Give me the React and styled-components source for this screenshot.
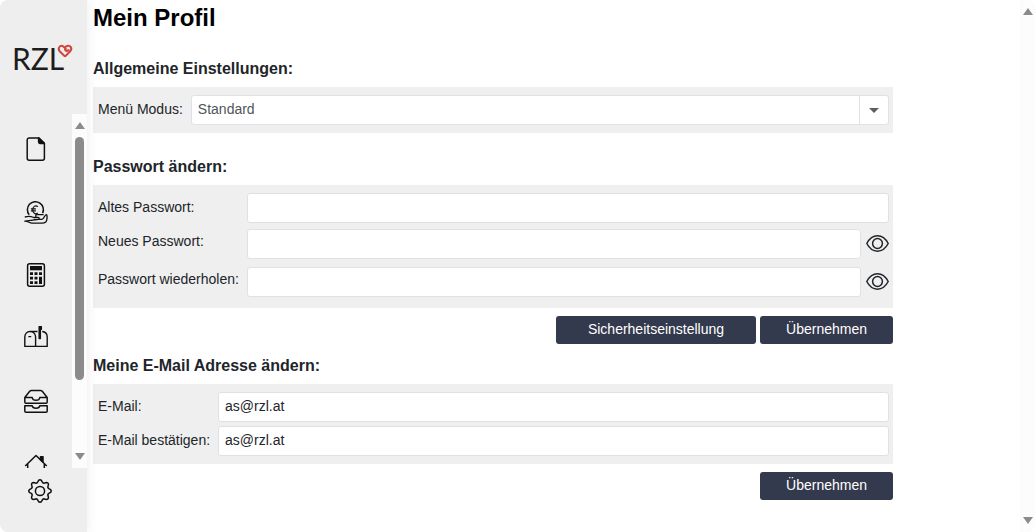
import React, { useState } from "react";
import styled, { createGlobalStyle, css } from "styled-components";

const GlobalStyle = createGlobalStyle`
  *, *::before, *::after { box-sizing: border-box; }
  body {
    margin: 0;
    background: #fff;
    color: #212529;
    font-family: "Liberation Sans", Arial, sans-serif;
    font-size: 14px;
  }
  input, select, button { font: inherit; }
`;

const Shell = styled.div`
  display: flex;
  height: 100vh;
  overflow: hidden;
  border-radius: 8px;
`;

const Sidebar = styled.aside`
  display: flex;
  flex-direction: column;
  flex: none;
  width: 87px;
  background: #eee;
  box-shadow: 0 0 12px rgba(0, 0, 0, 0.08);
  z-index: 1;
`;

const LogoLink = styled.a`
  flex: none;
  height: 114px;
  padding: 38px 0 0 13px;
  svg { display: block; }
`;

const NavArea = styled.div`
  display: flex;
  flex: 1;
  min-height: 0;
`;

const Nav = styled.nav`
  flex: 1;
  overflow: hidden;
  padding-top: 4px;
`;

const NavLink = styled.a`
  display: flex;
  justify-content: center;
  height: 63px;
  padding-top: 19px;
  color: #111;
`;

const SidebarFooter = styled.div`
  flex: none;
  height: 64px;
  padding: 11px 0 0 28px;
`;

const SettingsLink = styled.a`
  display: block;
  width: 24px;
  height: 24px;
  color: #111;
`;

const Scrollbar = styled.div`
  display: flex;
  flex-direction: column;
  align-items: center;
  flex: none;
  width: 15px;
  padding: 8px 0;
  background: #fcfcfc;
`;

const ScrollArrow = styled.span`
  border: 5px solid transparent;
  ${(p) =>
    p.$down
      ? css`border-top: 7px solid #8b8b8b; border-bottom: 0;`
      : css`border-bottom: 7px solid #8b8b8b; border-top: 0;`}
`;

const ScrollTrack = styled.div`
  flex: 1;
  padding: 8px 0;
`;

const ScrollThumb = styled.div`
  width: 9px;
  height: 79%;
  border-radius: 5px;
  background: #8b8b8b;
`;

const Main = styled.main`
  flex: 1;
  min-width: 0;
  overflow: hidden;
  padding-left: 6px;
`;

const Content = styled.div`
  max-width: 800px;
`;

const Title = styled.h1`
  margin: 0 0 23px;
  color: #000;
  font-size: 24px;
  line-height: 36px;
`;

const Section = styled.form`
  margin: 0 0 ${(p) => (p.$spaced ? 24 : 12)}px;
`;

const Heading = styled.h2`
  margin: 0 0 8px;
  font-size: 16px;
  line-height: 20px;
`;

const Panel = styled.div`
  display: grid;
  grid-template-columns: auto 1fr;
  gap: 4px 8px;
  padding: 8px 4px ${(p) => (p.$deep ? 9 : 8)}px 5px;
  background: #efefef;
`;

const Label = styled.label`
  line-height: 28px;
  white-space: nowrap;
`;

const fieldStyle = css`
  display: block;
  width: 100%;
  min-width: 0;
  height: 30px;
  padding: 0 6px 2px;
  border: 1px solid #dee2e6;
  border-radius: 3px;
  background: #fff;
  color: #212529;
  outline-color: #333a4d;
`;

const Input = styled.input`
  ${fieldStyle}
`;

const SelectBox = styled.div`
  position: relative;
`;

const Select = styled.select`
  ${fieldStyle}
  appearance: none;
  color: #50555a;
`;

const SelectArrow = styled.span`
  position: absolute;
  top: 1px;
  right: 1px;
  bottom: 1px;
  display: flex;
  align-items: center;
  justify-content: center;
  width: 29px;
  border-left: 1px solid #dee2e6;
  pointer-events: none;
  &::after {
    content: "";
    border: 5px solid transparent;
    border-top-color: #5c5e63;
    border-bottom: 0;
  }
`;

const PasswordRow = styled.div`
  display: flex;
  align-items: center;
  gap: 5px;
  height: 34px;
`;

const EyeButton = styled.button`
  flex: none;
  width: 23px;
  height: 24px;
  padding: 0;
  border: 0;
  background: none;
  color: #212529;
  cursor: pointer;
  svg { display: block; }
`;

const Actions = styled.div`
  display: flex;
  justify-content: flex-end;
  gap: 4px;
  padding-top: 8px;
`;

const Button = styled.button`
  width: ${(p) => (p.$wide ? 200 : 133)}px;
  height: 28px;
  padding: 0 0 2px;
  border: 0;
  border-radius: 3px;
  background: #333a4d;
  color: #fff;
  cursor: pointer;
`;

const Icon = ({ children }) => (
  <svg width="24" height="24" viewBox="0 0 24 24" fill="none" stroke="currentColor" strokeWidth="1.5" strokeLinejoin="round" aria-hidden="true">
    {children}
  </svg>
);

const FileIcon = () => (
  <Icon>
    <path d="M5.200.9h9.600l5.600 5.400v14.900a2 2 0 0 1-2 2H5.200a2 2 0 0 1-2-2V2.900a2 2 0 0 1 2-2z" />
    <path d="M14.600 1l5.600 5.400h-4.300a1.300 1.300 0 0 1-1.300-1.300z" fill="currentColor" />
  </Icon>
);

const CoinHandIcon = () => (
  <Icon>
    <path d="M5.200 14.800a8 8 0 1 1 13.400-1.600" />
    <path d="M14 6.600c-2.800-1.700-5.300 0-5.300 3.200s2.500 4.900 5.300 3.200M6.900 8.900h5M6.900 10.900h5" strokeWidth="1.100" />
    <path d="M.8 17c3.200-.9 6-.9 8.200.3h2.800v-2.600h7.800M11.800 17.300h2.400c1.300 0 1.300 2 0 2H9.500M15 19.300h3c2.300 0 2.400-4.600 4.300-4.600 1.300 0 .9 6-.5 7.200-.9.800-2.200 1.200-3.800 1.200H8c-2.500 0-3.800-1.900-7.200-1.900z" strokeWidth="1.300" />
  </Icon>
);

const CalculatorIcon = () => (
  <Icon>
    <rect x="3.600" y=".8" width="16.800" height="22.400" rx="2" />
    <g fill="currentColor" stroke="none">
      <path d="M6 3h12v4.300H6z" />
      <path d="M6 9.200h3v2.700H6zM10.500 9.200h3v2.700h-3zM15 9.200h3v2.700h-3zM6 13.700h3v2.700H6zM10.500 13.700h3v2.700h-3zM6 18.200h3v2.700H6zM10.500 18.200h3v2.700h-3zM15 13.700h3v7.200h-3z" />
    </g>
  </Icon>
);

const MailboxIcon = () => (
  <Icon>
    <path d="M13.500 5.500H6C2.800 5.500.8 8 .8 11v9.400h22.400V11c0-3-1.900-5.200-5-5.500M6 5.500c3.300 0 5.600 2.500 5.600 5.500v9.400M4.400 10.600h2.800" strokeWidth="1.400" />
    <path d="M15.200 12.500V.7h2.100v2.500h-1v9.300z" fill="currentColor" />
  </Icon>
);

const TraysIcon = () => (
  <Icon>
    <path d="M.8 8.500l4.900-6.200c.5-.6 1-.9 1.800-.9h9c.8 0 1.300.3 1.800.9l4.900 6.200v4.400c0 .8-.4 1.300-1.200 1.300H2c-.8 0-1.200-.5-1.200-1.300zM.8 8.500h7.400c.5 3.800 7.100 3.800 7.600 0h7.400" />
    <path d="M.8 16.700h7.400c.5 3.500 7.100 3.500 7.600 0h7.400v5.200c0 .8-.4 1.300-1.200 1.300H2c-.8 0-1.200-.5-1.200-1.300z" />
  </Icon>
);

const HouseIcon = () => (
  <Icon>
    <path d="M1.200 14L12 3.500 22.800 14M3.700 12v11h16.600V12" />
    <path d="M16.500 4.800h2.500v5.300l-2.500-2.400z" fill="currentColor" />
  </Icon>
);

const gearPoints = Array.from({ length: 96 }, (_, i) => {
  const angle = (i / 96) * Math.PI * 2;
  const wave = Math.cos(angle * 8);
  const radius = 9.9 + 1.3 * Math.sign(wave) * Math.pow(Math.abs(wave), 0.8);
  return `${(12 + radius * Math.cos(angle)).toFixed(2)},${(12 + radius * Math.sin(angle)).toFixed(2)}`;
}).join(" ");

const GearIcon = () => (
  <Icon>
    <polygon points={gearPoints} />
    <circle cx="12" cy="12" r="4.600" />
  </Icon>
);

const EyeIcon = () => (
  <svg width="23" height="24" viewBox="0 0 23 24" fill="none" stroke="currentColor" strokeWidth="1.5" aria-hidden="true">
    <path d="M.8 11.500C6.200 1.200 16.800 1.200 22.200 11.500 16.800 21.800 6.200 21.800.8 11.500z" strokeLinejoin="round" />
    <circle cx="11.500" cy="11.500" r="4.900" />
  </svg>
);

const Logo = () => (
  <svg width="64" height="44" viewBox="0 0 64 44" role="img" aria-label="RZL">
    <text x="-1" y="32" fill="#1d1d1b" fontFamily="Lato, sans-serif" fontSize="30">RZL</text>
    <path d="M52 18.500L46.900 13.500C44 10.500 47.200 6.200 50.400 8.500L53.500 11.600M52 18.500l5-5C60.200 10.300 56.500 5.600 53 8.600c-2 1.700-1 4.200.5 4.400 1.200.1 2-.9 2-1.800" fill="none" stroke="#d0453d" strokeWidth="2" strokeLinejoin="round" />
  </svg>
);

const navItems = [
  ["Dokumente", FileIcon],
  ["Zahlungen", CoinHandIcon],
  ["Rechner", CalculatorIcon],
  ["Postfach", MailboxIcon],
  ["Ablage", TraysIcon],
  ["Start", HouseIcon],
];

function PasswordField({ id }) {
  const [visible, setVisible] = useState(false);
  return (
    <PasswordRow>
      <Input id={id} type={visible ? "text" : "password"} />
      <EyeButton type="button" aria-label="Passwort anzeigen" onClick={() => setVisible(!visible)}>
        <EyeIcon />
      </EyeButton>
    </PasswordRow>
  );
}

export default function App() {
  return (
    <>
      <GlobalStyle />
      <Shell>
        <Sidebar>
          <LogoLink href="#"><Logo /></LogoLink>
          <NavArea>
            <Nav>
              {navItems.map(([name, Glyph]) => (
                <NavLink key={name} href="#" aria-label={name}><Glyph /></NavLink>
              ))}
            </Nav>
            <Scrollbar aria-hidden="true">
              <ScrollArrow />
              <ScrollTrack><ScrollThumb /></ScrollTrack>
              <ScrollArrow $down />
            </Scrollbar>
          </NavArea>
          <SidebarFooter>
            <SettingsLink href="#" aria-label="Einstellungen"><GearIcon /></SettingsLink>
          </SidebarFooter>
        </Sidebar>
        <Main>
          <Content>
            <Title>Mein Profil</Title>
            <Section $spaced>
              <Heading>Allgemeine Einstellungen:</Heading>
              <Panel>
                <Label htmlFor="mode">Menü Modus:</Label>
                <SelectBox>
                  <Select id="mode" defaultValue="Standard">
                    <option>Standard</option>
                  </Select>
                  <SelectArrow />
                </SelectBox>
              </Panel>
            </Section>
            <Section>
              <Heading>Passwort ändern:</Heading>
              <Panel $deep>
                <Label htmlFor="old-password">Altes Passwort:</Label>
                <Input id="old-password" type="password" />
                <Label htmlFor="new-password">Neues Passwort:</Label>
                <PasswordField id="new-password" />
                <Label htmlFor="repeat-password">Passwort wiederholen:</Label>
                <PasswordField id="repeat-password" />
              </Panel>
              <Actions>
                <Button type="button" $wide>Sicherheitseinstellung</Button>
                <Button type="button">Übernehmen</Button>
              </Actions>
            </Section>
            <Section>
              <Heading>Meine E-Mail Adresse ändern:</Heading>
              <Panel>
                <Label htmlFor="email">E-Mail:</Label>
                <Input id="email" type="email" defaultValue="as@rzl.at" />
                <Label htmlFor="confirm-email">E-Mail bestätigen:</Label>
                <Input id="confirm-email" type="email" defaultValue="as@rzl.at" />
              </Panel>
              <Actions>
                <Button type="button">Übernehmen</Button>
              </Actions>
            </Section>
          </Content>
        </Main>
        <Scrollbar aria-hidden="true">
          <ScrollArrow />
          <ScrollTrack />
          <ScrollArrow $down />
        </Scrollbar>
      </Shell>
    </>
  );
}
